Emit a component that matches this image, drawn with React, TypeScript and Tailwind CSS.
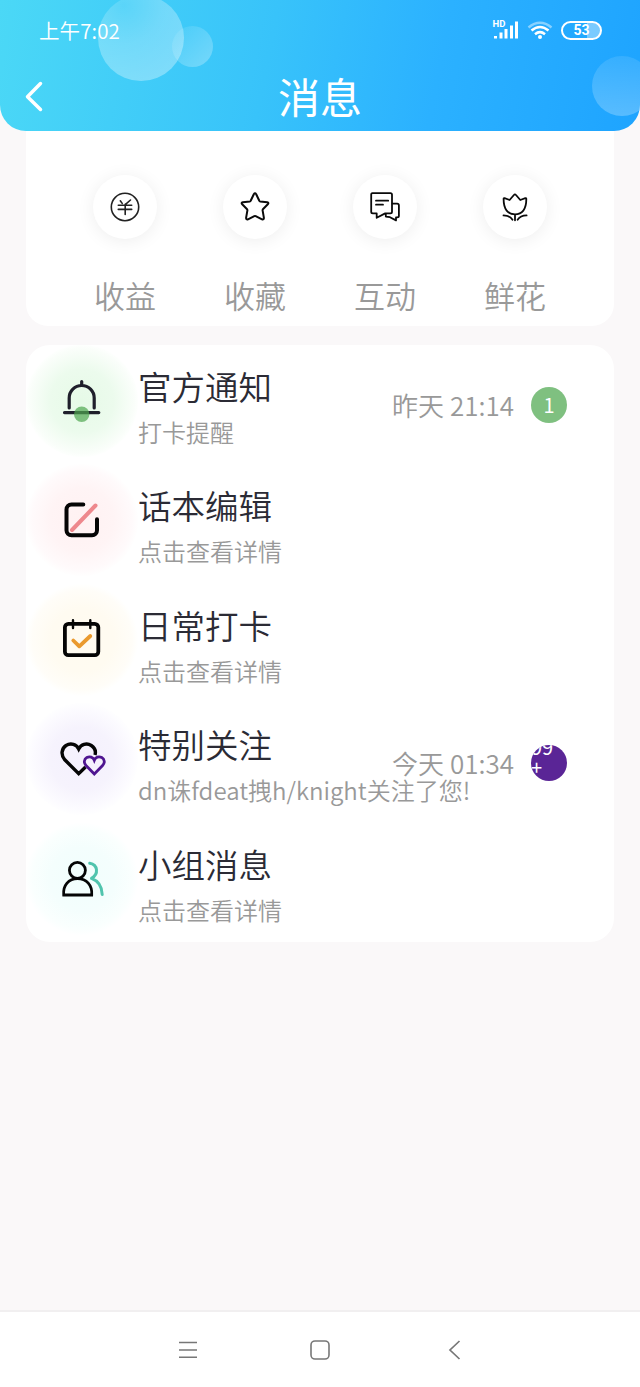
import React from 'react';

interface Shortcut {
  label: string;
  icon: React.ReactNode;
}

interface MessageRow {
  title: string;
  subtitle: string;
  glow: string;
  icon: React.ReactNode;
  time?: string;
  badge?: string;
  badgeClass?: string;
}

const shortcuts: Shortcut[] = [
  {
    label: '收益',
    icon: (
      <g stroke="#222" strokeWidth="1.6">
        <circle cx="16" cy="16" r="13.7" />
        <path d="M11.3 9.8l1.9 2.6M21.5 9l-5 4.3M9.3 14.2h13.4M9.3 18.4h13.4M16.2 13.4v10" />
      </g>
    ),
  },
  {
    label: '收藏',
    icon: (
      <path
        d="M14.8 3.2q1.2-1.8 2.4 0l3.1 6.6q.3.5.9.6l7 .9q2 .5.6 2l-4.9 5q-.4.5-.3 1l1.3 7.6q0 2-1.9 1.4l-6.3-3.2q-.7-.3-1.4 0L9 28.3q-1.9.6-1.9-1.4l1.3-7.6q.1-.5-.3-1l-4.9-5q-1.4-1.5.6-2l7-.9q.6-.1.9-.6z"
        strokeWidth="2"
      />
    ),
  },
  {
    label: '互动',
    icon: (
      <g strokeWidth="1.8">
        <path d="M3.4 2.2h18q1.6 0 1.6 1.6v17q0 1.6-1.6 1.6h-5.2l-8.5 4.4v-4.4H3.8q-1.6 0-1.6-1.6v-17q0-1.6 1.2-1.6z" />
        <path d="M23.5 12.6h4.6q1.8 0 1.8 1.8v10.4q0 1.6-1.6 1.6h-1.3v3l-6-3.2-4.2-.6v-2.4" />
        <path d="M7 9.7h12.2M7 13.7h7" />
      </g>
    ),
  },
  {
    label: '鲜花',
    icon: (
      <g strokeWidth="1.8">
        <path d="M16 23.3C9 23.3 4.6 18.500 4.600 8q0-1 1-.8l5 1.8 4.300-5q1-1.400 2.100 0l4.300 5 5-1.800q1-.2 1 .8C27.400 18.500 23 23.300 16 23.300zM16 23.300v6" />
        <path d="M4.500 24.400c4 0 7 1.200 9 4.300M27.600 24.400c-4 0-7 1.200-9 4.300" />
      </g>
    ),
  },
];

const rows: MessageRow[] = [
  {
    title: '官方通知',
    subtitle: '打卡提醒',
    glow: 'bg-[radial-gradient(circle,#e6fae7_0%,#ecfbed_40%,#fafefa_66%,#fdfffd_70%)]',
    time: '昨天 21:14',
    badge: '1',
    badgeClass: 'bg-[#7fc080] items-center justify-center text-[20px] pt-px',
    icon: (
      <>
        <path d="M43.200 63V53a12.500 12.500 0 0 1 25 0V63M55.700 36.600V40M38.500 67.600H72.800" stroke="#1f1f2b" strokeWidth="3.200" />
        <circle cx="55.700" cy="69.300" r="7.700" fill="#4fa650" fillOpacity=".7" stroke="none" />
      </>
    ),
  },
  {
    title: '话本编辑',
    subtitle: '点击查看详情',
    glow: 'bg-[radial-gradient(circle,#fff1f2_0%,#fff4f5_40%,#fffafb_63%,#fffefe_70%)]',
    icon: (
      <>
        <path d="M57.300 40.500H45.500a5 5 0 0 0-5 5V66.300a5 5 0 0 0 5 5H66a5 5 0 0 0 5-5V55.300" strokeWidth="4" />
        <path d="M46 66L69.500 41.500" stroke="#ee888d" strokeWidth="4" />
      </>
    ),
  },
  {
    title: '日常打卡',
    subtitle: '点击查看详情',
    glow: 'bg-[radial-gradient(circle,#fffbf0_0%,#fffbf1_40%,#fffdf8_63%,#fffffe_70%)]',
    icon: (
      <>
        <rect x="38.900" y="39.800" width="33.400" height="31.400" rx="3.500" strokeWidth="3.800" />
        <path d="M47 36.300V44M64.300 36.300V44" strokeWidth="2.400" />
        <path d="M47.300 56.500L53.300 62.300L64.300 52" stroke="#ea9a2e" strokeWidth="3.800" />
      </>
    ),
  },
  {
    title: '特别关注',
    subtitle: 'dn诛fdeat拽h/knight关注了您!',
    glow: 'bg-[radial-gradient(circle,#f4f0fd_0%,#f6f3fd_40%,#fcfbff_63%,#fefeff_70%)]',
    time: '今天 01:34',
    badge: '99+',
    badgeClass: 'bg-[#5a2596] text-[20px] leading-[26px]',
    icon: (
      <>
        <path
          d="M59.500 64L52.700 70.700L38.800 56.800C34.500 52 35.500 45.500 40 42.500C45 39.500 50.500 41.500 52.700 46C55 41.500 60.500 39.500 65.300 42.500C68.800 44.800 70 48.500 69 52"
          strokeWidth="3.400"
          strokeLinecap="butt"
          strokeLinejoin="miter"
        />
        <path
          d="M68.300 71L60 62.500C57.500 59.800 58 56 60.800 54.500C63.800 53 67 54 68.300 57.300C69.600 54 72.800 53 75.800 54.500C78.600 56 79.200 59.800 76.600 62.500Z"
          stroke="#4f1590"
          strokeWidth="2.800"
          strokeLinejoin="miter"
        />
      </>
    ),
  },
  {
    title: '小组消息',
    subtitle: '点击查看详情',
    glow: 'bg-[radial-gradient(circle,#f1fefc_0%,#f4fefd_40%,#fafffe_63%,#feffff_70%)]',
    icon: (
      <>
        <circle cx="51.400" cy="47.300" r="8" strokeWidth="2.800" />
        <path d="M37.700 72H65.700C66.500 62 60.500 55.700 51.500 55.700C42.800 55.700 36.800 62 37.700 72Z" strokeWidth="2.800" strokeLinejoin="miter" />
        <path d="M63.700 40.200C71.800 41.500 73 51 65.500 55.400C72.500 58 76 63.500 76.200 71.500" stroke="#50c4ad" strokeWidth="3" />
      </>
    ),
  },
];

function StatusBar() {
  return (
    <div className="relative flex h-[60px] items-center pl-[39px] pr-[38px] text-white">
      <span className="text-[20.500px] leading-none tracking-[0.100px] font-[350]">上午7:02</span>
      <div className="ml-auto flex items-center">
        <svg width="28" height="22" viewBox="0 0 28 22" fill="none" stroke="#fff">
          <text x="0.500" y="8" fontSize="9.500" fontWeight="700" fill="#fff" stroke="none" fontFamily="Roboto">HD</text>
          <path d="M3.500 19.500V17M9 19.500V13.500M14 19.500V10M19.500 19.500V6.500M24.500 19.500V2.500" strokeWidth="3" />
        </svg>
        <svg className="ml-[7px]" width="26" height="22" viewBox="0 0 26 22" fill="none" stroke="#fff" strokeWidth="2.500">
          <path d="M1.500 8.500Q13-1 24.500 8.500" opacity=".45" />
          <path d="M4.500 11.500Q13 4.500 21.500 11.500M8 15.200Q13 11 18 15.200" />
          <circle cx="13" cy="18" r="2" fill="#fff" stroke="none" />
        </svg>
        <div className="ml-[8px] flex h-[19px] w-[41px] items-center justify-center rounded-full border-2 border-white bg-linear-to-r from-transparent from-65% to-white/40 to-65% font-[Roboto] text-[14px] font-bold leading-none">
          53
        </div>
      </div>
    </div>
  );
}

function Header() {
  return (
    <header className="relative z-10 h-[131px] overflow-hidden rounded-b-[26px] bg-[linear-gradient(101deg,#4bd8f6_0%,#38c3fa_42%,#2bb1ff_68%,#1ea4ff_100%)]">
      <div className="absolute -top-[5px] left-[98px] size-[86px] rounded-full bg-[radial-gradient(circle_at_30%_12%,#ffffff20_0%,#ffffff42_40%,#ffffff5c_100%)]" />
      <div className="absolute left-[172px] top-[26px] size-[41px] rounded-full bg-linear-to-br from-white/5 to-white/30" />
      <div className="absolute left-[592px] top-[56px] size-[60px] rounded-full bg-linear-to-b from-white/10 to-white/25" />
      <StatusBar />
      <div className="relative flex h-[71px] items-center justify-center">
        <svg className="absolute left-[24px] top-[20px]" width="20" height="32" viewBox="0 0 20 32" fill="none" stroke="#fff" strokeWidth="3.500" strokeLinecap="round" strokeLinejoin="round">
          <path d="M16.500 3.500L3.500 16.700L16.500 29.500" />
        </svg>
        <h1 className="text-[42px] font-normal leading-none text-white">消息</h1>
      </div>
    </header>
  );
}

function MessageItem({ row }: { row: MessageRow }) {
  return (
    <li className="flex h-[119.400px] pr-[47px]">
      <div className={`size-[112px] shrink-0 rounded-full ${row.glow}`}>
        <svg width="112" height="112" viewBox="0 0 112 112" fill="none" stroke="#050505" strokeLinecap="round" strokeLinejoin="round">
          {row.icon}
        </svg>
      </div>
      <div className="min-w-0 flex-1 whitespace-nowrap pt-[17px]">
        <h2 className="text-[33.500px] font-[350] leading-[48px] text-[#2b2b35]">{row.title}</h2>
        <p className="mt-[5px] text-[24px] font-[350] leading-[34px] text-[#999]">{row.subtitle}</p>
      </div>
      {row.time && (
        <div className="flex items-center gap-[17px]">
          <span className="text-[26px] font-[350] leading-none text-[#999]">{row.time}</span>
          <span className={`flex size-[36px] flex-wrap overflow-hidden rounded-full leading-none text-white ${row.badgeClass}`}>
            {row.badge === '99+' ? (
              <span className="-mt-[8px] w-[24px] break-all">{row.badge}</span>
            ) : (
              row.badge
            )}
          </span>
        </div>
      )}
    </li>
  );
}

function NavBar() {
  return (
    <nav className="flex h-[77px] items-center border-t-2 border-[#f1eff0] bg-white pl-[178px] text-[#777]">
      <svg width="20" height="20" viewBox="0 0 20 20" fill="none" stroke="currentColor" strokeWidth="1.600">
        <path d="M1 2.500H19M1 10H19M1 17.300H19" />
      </svg>
      <svg className="ml-[112px]" width="20" height="20" viewBox="0 0 20 20" fill="none" stroke="currentColor" strokeWidth="1.600">
        <rect x="1" y="1" width="18" height="18" rx="4" />
      </svg>
      <svg className="ml-[118px]" width="14" height="20" viewBox="0 0 14 20" fill="none" stroke="currentColor" strokeWidth="1.700">
        <path d="M11.500 1L2 10L11.500 19" />
      </svg>
    </nav>
  );
}

export default function App() {
  return (
    <div className="flex h-[1387px] w-[640px] flex-col overflow-hidden bg-[#faf8f9] font-['Noto_Sans_CJK_SC',sans-serif]">
      <Header />
      <main className="flex-1 px-[26px]">
        <section className="flex h-[195px] rounded-b-[22px] bg-white px-[34px] pt-[44px]">
          {shortcuts.map((item) => (
            <div key={item.label} className="flex w-[130px] flex-col items-center">
              <div className="flex size-16 items-center justify-center rounded-full bg-white shadow-[0_2px_18px_rgba(0,0,0,0.070)]">
                <svg width="32" height="32" viewBox="0 0 32 32" fill="none" stroke="#0a0a0a" strokeLinecap="round" strokeLinejoin="round">
                  {item.icon}
                </svg>
              </div>
              <span className="mt-[34px] text-[31px] font-[350] leading-[44px] text-[#999]">{item.label}</span>
            </div>
          ))}
        </section>
        <ul className="mt-[19px] h-[597px] rounded-[24px] bg-white">
          {rows.map((row) => (
            <MessageItem key={row.title} row={row} />
          ))}
        </ul>
      </main>
      <NavBar />
    </div>
  );
}
